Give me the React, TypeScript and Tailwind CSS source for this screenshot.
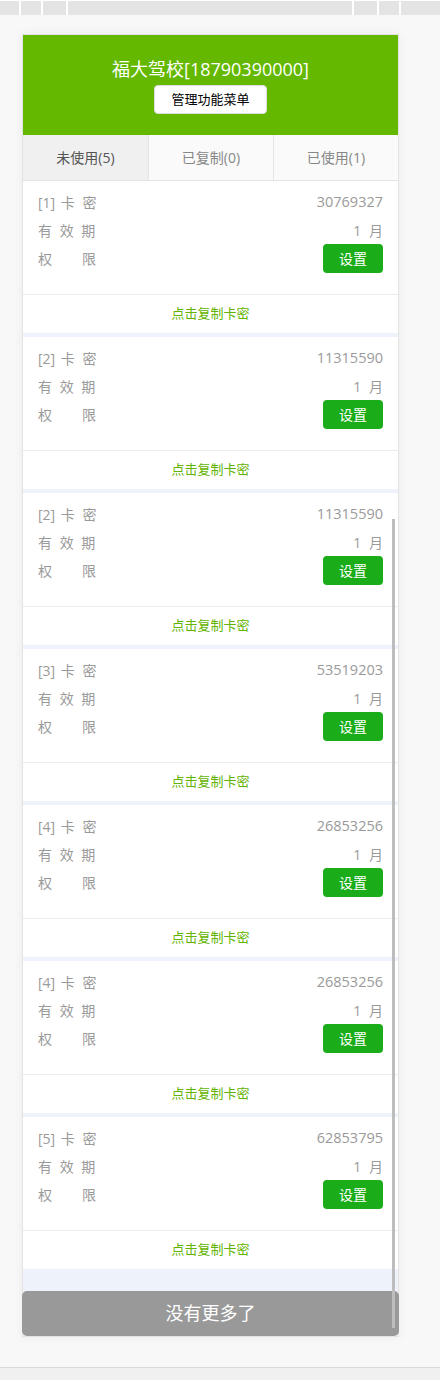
import React from "react";

interface CardKey {
  no: number;
  code: string;
}

const keys: CardKey[] = [
  { no: 1, code: "30769327" },
  { no: 2, code: "11315590" },
  { no: 2, code: "11315590" },
  { no: 3, code: "53519203" },
  { no: 4, code: "26853256" },
  { no: 4, code: "26853256" },
  { no: 5, code: "62853795" },
];

const tabs = ["未使用(5)", "已复制(0)", "已使用(1)"];

const KeyItem: React.FC<{ item: CardKey }> = ({ item }) => (
  <div className="bg-white mb-[4px]">
    {/* Info rows */}
    <div className="px-[15px] pt-[7px] pb-[22px] text-[14px] text-[#9a9a9a]">
      <div className="flex items-center justify-between h-[28px]">
        <span>
          [{item.no}]<span className="tracking-[2px]"> 卡 密</span>
        </span>
        <span className="text-[14.5px]">{item.code}</span>
      </div>
      <div className="flex items-center justify-between h-[28px]">
        <span className="tracking-[2px]">有 效 期</span>
        <span className="tracking-[2px] -mr-[2px]">1 月</span>
      </div>
      <div className="flex items-center justify-between h-[28px]">
        <span className="flex justify-between w-[58px]">
          <span>权</span>
          <span>限</span>
        </span>
        <button className="w-[60px] h-[29px] rounded-[4px] bg-[#1aad19] text-white text-[14px]">
          设置
        </button>
      </div>
    </div>
    {/* Copy action */}
    <div className="border-t border-[#ececec] h-[39px] flex items-center justify-center text-[13px] text-[#62b300]">
      点击复制卡密
    </div>
  </div>
);

export default function App() {
  return (
    <div
      className="relative w-[440px] h-[1380px] bg-[#f8f8f8] flex flex-col"
      style={{ fontFamily: '"Open Sans", "Noto Sans CJK SC", sans-serif' }}
    >
      {/* Top strip */}
      <div className="flex gap-[2px] pt-[1px] h-[15px] bg-white">
        <div className="w-[19px] bg-[#e4e4e4]" />
        <div className="w-[20px] bg-[#e4e4e4]" />
        <div className="w-[23px] bg-[#e4e4e4]" />
        <div className="w-[284px] bg-[#e4e4e4]" />
        <div className="w-[23px] bg-[#e4e4e4]" />
        <div className="w-[20px] bg-[#e4e4e4]" />
        <div className="flex-1 bg-[#e4e4e4]" />
      </div>

      {/* Card */}
      <div className="mx-[22px] mt-[19px] w-[377px] border border-[#e3e3e3] bg-white shadow-[0_0_10px_rgba(0,0,0,0.06)]">
        {/* Header */}
        <div className="h-[100px] bg-[#64b900] flex flex-col items-center pt-[22px]">
          <div className="text-[18px] leading-[24px] text-white">福大驾校[18790390000]</div>
          <button className="mt-[4px] w-[113px] h-[29px] rounded-[4px] bg-white text-[13px] text-black border border-[#ddd]">
            管理功能菜单
          </button>
        </div>

        {/* Tabs */}
        <div className="grid grid-cols-3 h-[46px] border-b border-[#e5e5e5] text-[14px]">
          {tabs.map((t, i) => (
            <div
              key={t}
              className={
                i === 0
                  ? "flex items-center justify-center bg-[#f0f0f0] text-[#555]"
                  : "flex items-center justify-center bg-[#fafafa] text-[#888] border-l border-[#e5e5e5]"
              }
            >
              {t}
            </div>
          ))}
        </div>

        {/* List */}
        <div className="bg-[#eef2fa]">
          {keys.map((k, i) => (
            <KeyItem key={i} item={k} />
          ))}
          <div className="h-[18px]" />
          <div className="h-[45px] -mx-[1px] rounded-[5px] bg-[#999] flex items-center justify-center text-[18px] text-white">
            没有更多了
          </div>
        </div>
      </div>

      {/* Inner scrollbar */}
      <div className="absolute left-[392px] top-[519px] w-[3px] h-[809px] bg-[#bdbdbd]" />

      {/* Bottom edge */}
      <div className="mt-auto h-[13px] border-t border-[#dadada] bg-[#f0f0f0]" />
    </div>
  );
}
